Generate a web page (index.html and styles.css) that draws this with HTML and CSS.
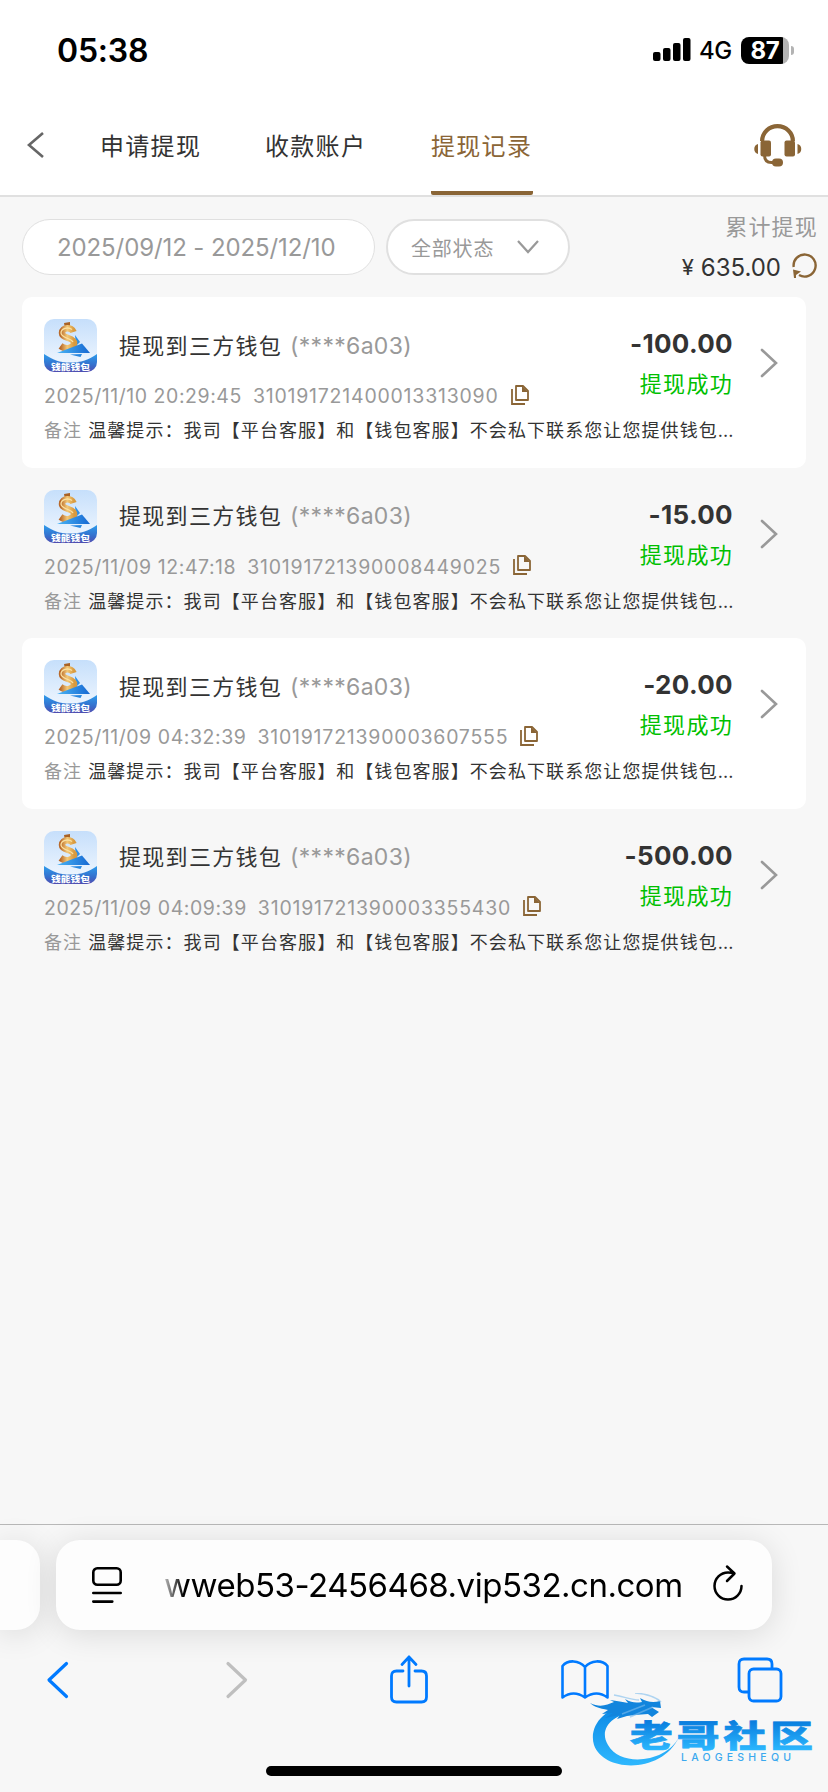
FILE: index.html
```html
<!DOCTYPE html>
<html lang="zh-CN">
<head>
<meta charset="utf-8">
<title>提现记录</title>
<link rel="stylesheet" href="styles.css">
</head>
<body>
<svg class="defs" width="0" height="0">
  <defs>
    <linearGradient id="sky" x1="0" y1="0" x2="0" y2="1"><stop offset="0" stop-color="#c6dffb"/><stop offset="1" stop-color="#f4f9ff"/></linearGradient>
    <linearGradient id="wave" x1="0" y1="0" x2="0" y2="1"><stop offset="0" stop-color="#2d9cec"/><stop offset=".6" stop-color="#3570cd"/><stop offset="1" stop-color="#504db0"/></linearGradient>
    <linearGradient id="gold" x1="0" y1="0" x2="1" y2="0"><stop offset="0" stop-color="#b8692a"/><stop offset=".5" stop-color="#f3c878"/><stop offset="1" stop-color="#d99a3e"/></linearGradient>
    <linearGradient id="plane" x1="0" y1="0" x2="1" y2="0"><stop offset="0" stop-color="#49b4f5"/><stop offset="1" stop-color="#1668d2"/></linearGradient>
    <symbol id="wallet" viewBox="0 0 53 53">
      <rect width="53" height="53" rx="10" fill="url(#sky)"/>
      <path d="M31 16l5 7-4 4z" fill="#2e8fe6"/>
      <path d="M20 4l6-1 0 5-5 1z" fill="#a96225"/>
      <path d="M29.500 13C28 8 18 7.500 18 14c0 6 12 4 12 10 0 5-8 7-13.500 3" fill="none" stroke="url(#gold)" stroke-width="6.500"/>
      <path d="M28 10.500C24 7.500 17 9.500 17 14c0 5 10 5 12 9" fill="none" stroke="#fbe0a0" stroke-width="1.300"/>
      <path d="M13 34L38 24.500 46 34z" fill="url(#plane)"/>
      <path d="M0 35c9 6 15 8.500 26 8.500S45 41 53 35v8a10 10 0 0 1-10 10H10A10 10 0 0 1 0 43z" fill="url(#wave)"/>
      <path d="M26 35.500l12-.5-1.500 3z" fill="#2586e0"/>
      <text x="7" y="50.500" textLength="39" lengthAdjust="spacingAndGlyphs" class="wallet-name">钱能钱包</text>
    </symbol>
    <symbol id="copy" viewBox="0 0 18 20">
      <path d="M5 1h7l5 5v9H5z" fill="none" stroke="#8a6536" stroke-width="1.800" stroke-linejoin="round"/>
      <path d="M11 1l6 6h-6z" fill="#8a6536"/>
      <path d="M1 4v15h13" fill="none" stroke="#8a6536" stroke-width="1.800"/>
    </symbol>
    <symbol id="chevron" viewBox="0 0 20 32">
      <path d="M3 3l14 13L3 29" fill="none" stroke="#999" stroke-width="2.600" stroke-linecap="round"/>
    </symbol>
  </defs>
</svg>
<div class="screen">
  <header class="status-bar">
    <span class="clock">05:38</span>
    <svg class="signal" width="38" height="24" viewBox="0 0 38 24"><rect x="0" y="14" width="7.500" height="9" rx="2"/><rect x="10" y="10" width="7.500" height="13" rx="2"/><rect x="20" y="5" width="7.500" height="18" rx="2"/><rect x="30" y="0" width="7.500" height="23" rx="2"/></svg>
    <span class="network">4G</span>
    <div class="battery"><span class="level">87</span></div>
    <span class="battery-tip"></span>
  </header>
  <nav class="nav">
    <svg class="back" width="20" height="30" viewBox="0 0 20 30"><path d="M17 3L3 15l14 12" fill="none" stroke="#666" stroke-width="2.600"/></svg>
    <a class="tab">申请提现</a><a class="tab">收款账户</a><a class="tab active">提现记录</a>
    <svg class="support" width="48" height="44" viewBox="0 0 48 44" fill="#8a6536">
      <path d="M6 17a17 16.500 0 0 1 35 0h-4.200a13 12.500 0 0 0-26.600 0z"/>
      <rect x="6.500" y="16.500" width="10.500" height="16" rx="2"/><rect x="30.500" y="16.500" width="10.500" height="16" rx="2"/>
      <path d="M4 20v10c-5-1-5-9 0-10zM43.500 20v10c5-1 5-9 0-10z"/>
      <path d="M10.500 31c0 5 2 7.500 7 7.500h4" fill="none" stroke="#8a6536" stroke-width="3"/>
      <rect x="18" y="34.500" width="11" height="8" rx="4"/>
    </svg>
  </nav>
  <section class="filters">
    <div class="pill dates">2025/09/12 - 2025/12/10</div>
    <div class="pill state">全部状态<svg width="24" height="16" viewBox="0 0 24 16"><path d="M2 2l10 11L22 2" fill="none" stroke="#999" stroke-width="2.200"/></svg></div>
    <div class="total">
      <span class="total-label">累计提现</span>
      <div class="total-row"><span class="yen">¥</span><span class="sum">635.00</span>
        <svg width="26" height="26" viewBox="0 0 26 26"><path d="M1.700 14A11 11 0 1 1 7 22" fill="none" stroke="#8a6536" stroke-width="2.400"/><path d="M1 16.500l8 2-5 3.500v3H2z" fill="#8a6536"/></svg>
      </div>
    </div>
  </section>
  <main class="records">
    <article class="record">
      <div class="info"><div class="head"><svg class="logo"><use href="#wallet"/></svg><span class="title">提现到三方钱包</span><span class="account">(****6a03)</span></div>
      <div class="meta"><span>2025/11/10 20:29:45</span><span class="order">310191721400013313090</span><svg class="copy"><use href="#copy"/></svg></div>
      <div class="remark"><span class="label">备注</span>温馨提示：我司【平台客服】和【钱包客服】不会私下联系您让您提供钱包<span class="dots">...</span></div></div>
      <div class="result"><strong>-100.00</strong><span>提现成功</span></div><svg class="more"><use href="#chevron"/></svg>
    </article>
    <article class="record">
      <div class="info"><div class="head"><svg class="logo"><use href="#wallet"/></svg><span class="title">提现到三方钱包</span><span class="account">(****6a03)</span></div>
      <div class="meta"><span>2025/11/09 12:47:18</span><span class="order">310191721390008449025</span><svg class="copy"><use href="#copy"/></svg></div>
      <div class="remark"><span class="label">备注</span>温馨提示：我司【平台客服】和【钱包客服】不会私下联系您让您提供钱包<span class="dots">...</span></div></div>
      <div class="result"><strong>-15.00</strong><span>提现成功</span></div><svg class="more"><use href="#chevron"/></svg>
    </article>
    <article class="record">
      <div class="info"><div class="head"><svg class="logo"><use href="#wallet"/></svg><span class="title">提现到三方钱包</span><span class="account">(****6a03)</span></div>
      <div class="meta"><span>2025/11/09 04:32:39</span><span class="order">310191721390003607555</span><svg class="copy"><use href="#copy"/></svg></div>
      <div class="remark"><span class="label">备注</span>温馨提示：我司【平台客服】和【钱包客服】不会私下联系您让您提供钱包<span class="dots">...</span></div></div>
      <div class="result"><strong>-20.00</strong><span>提现成功</span></div><svg class="more"><use href="#chevron"/></svg>
    </article>
    <article class="record">
      <div class="info"><div class="head"><svg class="logo"><use href="#wallet"/></svg><span class="title">提现到三方钱包</span><span class="account">(****6a03)</span></div>
      <div class="meta"><span>2025/11/09 04:09:39</span><span class="order">310191721390003355430</span><svg class="copy"><use href="#copy"/></svg></div>
      <div class="remark"><span class="label">备注</span>温馨提示：我司【平台客服】和【钱包客服】不会私下联系您让您提供钱包<span class="dots">...</span></div></div>
      <div class="result"><strong>-500.00</strong><span>提现成功</span></div><svg class="more"><use href="#chevron"/></svg>
    </article>
  </main>
  <footer class="browser">
    <div class="address-row">
      <div class="prev-page"></div>
      <div class="address">
        <svg width="32" height="38" viewBox="0 0 32 38" fill="none" stroke="#000" stroke-width="2.600" stroke-linecap="round"><rect x="2.300" y="2.300" width="27.400" height="16.500" rx="4"/><path d="M2.300 27h27.400M2.300 35.600h19"/></svg>
        <span class="url">wweb53-2456468.vip532.cn.com</span>
        <svg class="reload" width="32" height="38" viewBox="0 0 32 38" fill="none" stroke="#000" stroke-width="2.500" stroke-linecap="round" stroke-linejoin="round"><path d="M29.500 22A13.500 13.500 0 1 1 16 8.500q4 0 6 1M15 2.500l7.500 7-7.500 7.500"/></svg>
      </div>
    </div>
    <div class="tools">
      <svg width="24" height="38" viewBox="0 0 24 38"><path d="M20.500 2.500L3 19l17.500 16.500" fill="none" stroke="#007aff" stroke-width="3.200" stroke-linecap="round" stroke-linejoin="round"/></svg>
      <svg class="forward" width="24" height="38" viewBox="0 0 24 38"><path d="M3 2.500L20.500 19 3 35.500" fill="none" stroke="#bfbfbf" stroke-width="3.200" stroke-linecap="round" stroke-linejoin="round"/></svg>
      <svg class="share" width="40" height="50" viewBox="0 0 40 50" fill="none" stroke="#007aff" stroke-width="2.800" stroke-linecap="round" stroke-linejoin="round"><path d="M14 17H7.500Q2.500 17 2.500 22v21q0 5 5 5h25q5 0 5-5V22q0-5-5-5H26M20 32V3M13 10.500l7-7.500 7 7.500"/></svg>
      <svg width="50" height="42" viewBox="0 0 50 42" fill="none" stroke="#007aff" stroke-width="2.600" stroke-linejoin="round"><path d="M25 8C19 1 8 .5 2.500 7v31.500q11-8 22.500 0q11.500-8 22.500 0V7C42 .5 31 1 25 8zv30.500"/></svg>
      <svg width="46" height="46" viewBox="0 0 46 46" fill="none" stroke="#007aff" stroke-width="2.800"><path d="M11 35H7q-5 0-5-5V7q0-5 5-5h23q5 0 5 5v4"/><rect x="12" y="12" width="32" height="32" rx="4.500"/></svg>
    </div>
    <div class="home-indicator"></div>
    <svg class="watermark" width="228" height="80" viewBox="0 0 228 80">
      <defs><linearGradient id="mark" gradientUnits="userSpaceOnUse" x1="0" y1="12" x2="0" y2="70"><stop offset="0" stop-color="#0a86e4"/><stop offset="1" stop-color="#2db6fd"/></linearGradient>
      <linearGradient id="letters" x1="0" y1="0" x2="0" y2="1"><stop offset=".2" stop-color="#087bdd"/><stop offset=".9" stop-color="#2db9ff"/></linearGradient></defs>
      <path d="M47 14C16 10-2 33 4 52c10 28 68 29 85-8-12 25-58 31-71 8C8 36 23 20 47 19z" fill="url(#mark)"/>
      <path d="M0 10c10 5 17 2 24-1l-4-2c7 1 13 2 18 3l-3-4c7 4 11 4 17 3l-2-4c7 4 13 5 20 3l1 7-10-1 8 5-7 5-4-3-13 1-8 1-10 3 3-4-15 3 8-5-11 1 6-4C9 15 4 14 0 10z" fill="#1285dd"/>
      <path d="M24 2c11 2 18 5 25 5M45 0c12 1 20 3 26 9M32 21l23-9M40 24l23-10" fill="none" stroke="#7dbdec" stroke-width="1.500" opacity=".6"/>
      <text class="mark-cn" transform="translate(40 53.500) scale(1.220 .87)" x="0" y="0" fill="url(#letters)" stroke="url(#letters)" textLength="150">老哥社区</text>
      <text class="mark-en" x="91" y="67.500" textLength="110">LAOGESHEQU</text>
    </svg>
  </footer>
</div>
</body>
</html>
```
FILE: styles.css
```css
* { box-sizing: border-box; }
body { margin: 0; background: #f7f7f7; font-family: Inter, "Noto Sans CJK SC", sans-serif; color: #333; }
svg { display: block; flex: none; }
.defs { position: absolute; }
.screen { width: 828px; height: 1792px; display: flex; flex-direction: column; overflow: hidden; white-space: nowrap; }

.status-bar { height: 100px; flex: none; background: #fff; display: flex; align-items: center; padding: 0 34px 0 57px; color: #000; }
.clock { font-size: 32px; font-weight: 600; letter-spacing: -.2px; margin-right: auto; }
.signal { margin-right: 8px; }
.network { font-size: 24px; font-weight: 500; width: 34px; margin-right: 8px; letter-spacing: -.5px; }
.battery { width: 48px; height: 27px; border-radius: 8px; background: linear-gradient(90deg, #000 42px, #b3b3b3 42px); }
.level { display: block; width: 48px; text-align: center; font-size: 24px; line-height: 27px; font-weight: 700; color: #fff; letter-spacing: -.4px; }
.battery-tip { width: 3px; height: 9px; margin-left: 2px; border-radius: 0 4px 4px 0; background: #b3b3b3; }

.nav { height: 97px; flex: none; background: #fff; border-bottom: 2px solid #e0e0e0; display: flex; padding-left: 26px; }
.back { margin: 30px 54px 0 0; }
.tab { width: 102px; margin-right: 63px; font-size: 24px; letter-spacing: 1.300px; line-height: 91px; height: 95px; padding-top: 1px; }
.tab.active { color: #8a6536; border-bottom: 4px solid #8a6536; border-radius: 2px; margin-left: 1px; }
.support { margin: 24px 26px 0 auto; }

.filters { height: 100px; flex: none; display: flex; padding: 22px 10px 0 22px; }
.pill { height: 56px; border: 1px solid #e0e0e0; border-radius: 28px; background: #fff; color: #999; }
.dates { width: 353px; padding-left: 34px; font-size: 24px; letter-spacing: -.1px; line-height: 55px; }
.state { width: 184px; margin-left: 11px; border-width: 2px; display: flex; align-items: center; justify-content: space-between; padding: 0 28px 0 23px; font-size: 20px; letter-spacing: .8px; }
.total { margin-left: auto; margin-top: -8px; display: flex; flex-direction: column; align-items: flex-end; }
.total-label { color: #999; font-size: 22px; letter-spacing: 1.200px; line-height: 32px; margin-right: 0; }
.total-row { display: flex; align-items: center; height: 48px; font-size: 24px; letter-spacing: 0; }
.yen { font-size: 22px; width: 19px; }
.total-row svg { margin-left: 11px; margin-top: -2px; }

.records { flex: 1; padding: 0 22px; }
.record { height: 170.500px; padding: 22px 25px 0 22px; display: flex; border-radius: 10px; }
.record:nth-child(odd) { background: #fff; }
.info { width: 580px; flex: none; }
.head { display: flex; align-items: center; height: 53px; }
.logo { width: 53px; height: 53px; }
.wallet-name { font: 900 8px "Noto Sans CJK SC", sans-serif; fill: #fff; }
.title { margin: -4px 0 0 22px; font-size: 22px; letter-spacing: 1.300px; }
.account { margin-left: 8px; font-size: 23px; color: #999; letter-spacing: .3px; }
.meta { display: flex; align-items: center; height: 24px; margin-top: 12px; color: #999; font-size: 19.500px; letter-spacing: .55px; }
.order { margin-left: 11px; letter-spacing: .78px; }
.copy { width: 18px; height: 20px; margin: -3px 0 0 12px; }
.remark { margin-top: 9px; height: 28px; line-height: 28px; font-size: 18px; letter-spacing: 1.080px; }
.label { color: #999; margin-right: 6px; }
.dots { letter-spacing: 0; }
.result { width: 109px; flex: none; margin-top: 9px; display: flex; flex-direction: column; align-items: flex-end; color: #00bf00; font-size: 22px; letter-spacing: 1.300px; line-height: 48px; }
.result strong { color: #333; font-size: 26px; letter-spacing: .35px; line-height: 32px; }
.more { width: 20px; height: 32px; margin: 28px 0 0 26px; }

.browser { height: 268px; flex: none; border-top: 1px solid #b8b8b8; position: relative; }
.address-row { display: flex; gap: 16px; padding-top: 15px; }
.prev-page { width: 40px; height: 90px; background: #fdfdfd; border-radius: 0 24px 24px 0; box-shadow: 0 4px 32px rgba(0,0,0,.12); }
.address { width: 716px; height: 90px; background: #fdfdfd; border-radius: 24px; box-shadow: 0 4px 32px rgba(0,0,0,.12); display: flex; align-items: center; padding: 0 28px 0 35px; color: #000; }
.url { font-size: 33px; letter-spacing: -.48px; margin-left: 41px; background: linear-gradient(90deg, #bbb 0, #000 20px); background-clip: text; color: transparent; }
.reload { margin: -4px 0 0 auto; }
.tools { display: grid; grid-template-columns: repeat(5, 1fr); justify-items: center; align-items: center; height: 50px; margin: 25px -20px 0 -30px; }
.forward { margin-left: 7px; }
.share { margin-top: -2px; }
.home-indicator { width: 296px; height: 10px; border-radius: 5px; background: #000; margin: 61px auto 0; }
.watermark { position: absolute; left: 590px; top: 168px; }
.mark-cn { font: 900 35px "Noto Sans CJK SC", sans-serif; stroke-width: .8px; }
.mark-en { font: 500 10.500px Inter, sans-serif; fill: #3aa8ee; }
```
